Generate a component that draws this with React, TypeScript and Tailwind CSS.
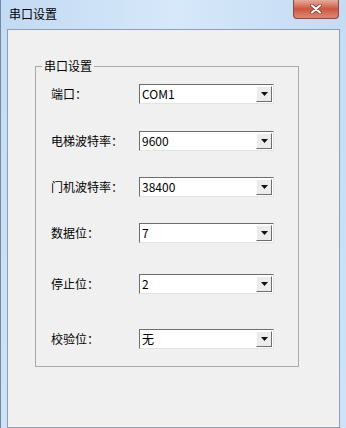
import React from 'react';

const ROWS = [
  { label: '端口：', value: 'COM1', gap: 'mt-[17px]' },
  { label: '电梯波特率：', value: '9600', gap: 'mt-[27px]' },
  { label: '门机波特率：', value: '38400', gap: 'mt-[26px]' },
  { label: '数据位：', value: '7', gap: 'mt-[26px]' },
  { label: '停止位：', value: '2', gap: 'mt-[31px]' },
  { label: '校验位：', value: '无', gap: 'mt-[35px]' },
];

const cjk = '"Noto Sans CJK SC", "Liberation Sans", sans-serif';

function ComboBox({ value }: { value: string }) {
  return (
    <div className="flex h-[20px] w-[135px] items-stretch border border-t-[#6d6d6d] border-l-[#6d6d6d] border-r-[#e3e3e3] border-b-[#e3e3e3] bg-white">
      <div
        className="flex flex-1 items-center pl-[2px] text-[12px] text-black"
        style={{ fontFamily: cjk }}
      >
        {value}
      </div>
      <div className="my-[1px] mr-[1px] flex w-[16px] items-center justify-center border border-t-[#fdfdfd] border-l-[#fdfdfd] border-r-[#6d6d6d] border-b-[#6d6d6d] bg-[#ececec]">
        <svg width="7" height="4" viewBox="0 0 7 4">
          <path d="M0 0h7L3.5 4z" fill="#111" />
        </svg>
      </div>
    </div>
  );
}

export default function App() {
  return (
    <div
      className="flex h-[428px] w-[346px] flex-col overflow-hidden border-l border-[#6f8aa6] bg-gradient-to-b from-[#c5dcf4] to-[#cfe2f6]"
      style={{ fontFamily: cjk }}
    >
      <div className="flex h-[29px] shrink-0 bg-gradient-to-r from-[#c2daf3] via-[#d6e8fa] to-[#c4dbf3]">
        <div className="pl-[8px] pt-[5px] text-[12px] leading-[18px] text-black">串口设置</div>
        <div className="ml-auto mr-[7px] flex h-[19px] w-[46px] items-center justify-center rounded-b-[4px] border border-t-0 border-[#8a4a40] bg-gradient-to-b from-[#e6aa9c] via-[#cc5640] to-[#dc8876]">
          <svg width="12" height="10" viewBox="0 0 12 10">
            <path d="M2 1.5l8 7M10 1.5l-8 7" stroke="#6a2a20" strokeWidth="3.4" strokeLinecap="round" />
            <path d="M2 1.5l8 7M10 1.5l-8 7" stroke="#fff" strokeWidth="2.2" strokeLinecap="round" />
          </svg>
        </div>
      </div>
      <div className="mx-[6px] flex-1 border border-[#8c9fb3] bg-[#f0f0f0]">
        <div className="relative ml-[27px] mt-[36px] flex h-[301px] w-[264px] flex-col border border-[#a9a9a9]">
          <div className="absolute left-[6px] top-[-9px] bg-[#f0f0f0] px-[2px] text-[12px] leading-[16px] text-black">
            串口设置
          </div>
          {ROWS.map((row) => (
            <div key={row.label} className={`flex items-center ${row.gap}`}>
              <div className="w-[103px] pl-[15px] text-[12px] leading-[20px] text-black">{row.label}</div>
              <ComboBox value={row.value} />
            </div>
          ))}
        </div>
      </div>
    </div>
  );
}
